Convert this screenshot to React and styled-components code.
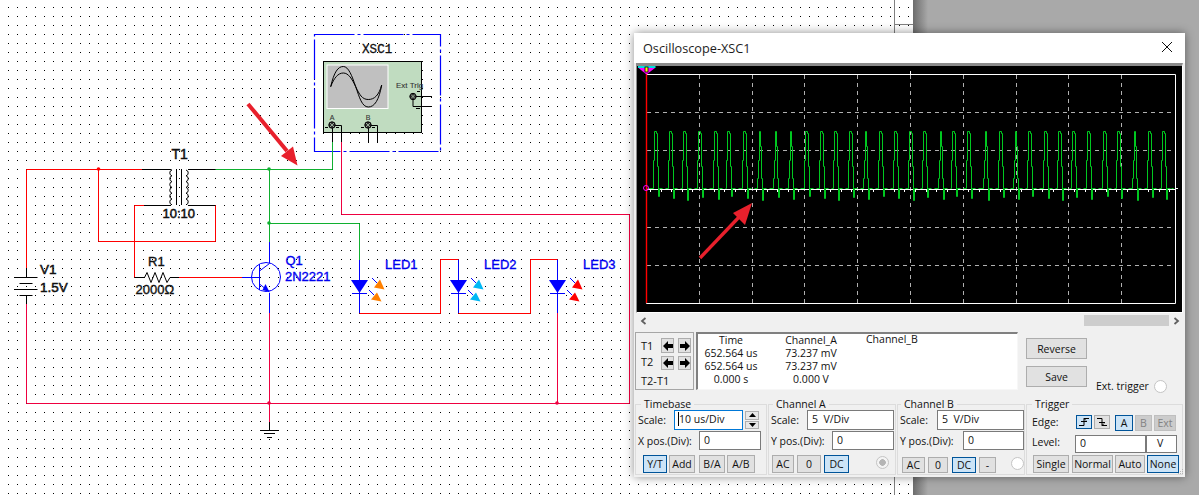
import React from 'react';
import styled, { createGlobalStyle } from 'styled-components';

const Global = createGlobalStyle`
  html, body { margin: 0; padding: 0; background: #a9a9a9; }
`;

const Page = styled.div`
  position: relative;
  width: 1199px;
  height: 495px;
  overflow: hidden;
  background: linear-gradient(to right, #6c6c6c 913px, #a9a9a9 928px);
`;
const Sheet = styled.svg`
  display: block;
  width: 913px;
  height: 495px;
  background: #fff;
`;
const Wire = styled.path`
  fill: none;
  stroke: ${p => p.$c};
  stroke-width: ${p => p.$w || 1}px;
`;
const Part = styled.g`
  fill: none;
  stroke: ${p => p.$c || '#000'};
  stroke-width: 1px;
`;
const Filled = styled.path`
  fill: ${p => p.$c};
  stroke: none;
`;
const Node = styled.circle`
  fill: ${p => p.$c};
  stroke: none;
`;
const Ref = styled.text`
  font-family: 'Liberation Sans', Arial, sans-serif;
  font-size: ${p => p.$s || 13}px;
  fill: ${p => p.$c || '#111'};
  stroke: ${p => p.$c || '#111'};
  stroke-width: ${p => p.$sw || 0.35}px;
  text-anchor: ${p => p.$a || 'start'};
`;
const Mono = styled(Ref)`
  font-family: 'Liberation Mono', monospace;
  font-size: 12.5px;
  letter-spacing: 0.1px;
`;

const Dialog = styled.div`
  position: absolute;
  left: 634px;
  top: 33px;
  width: 551px;
  height: 444px;
  background: #f0f0f0;
  box-shadow: 0 0 9px rgba(0, 0, 0, 0.45);
  font-family: 'Open Sans', 'Noto Sans', sans-serif;
  font-size: 10.5px;
  color: #111;
`;
const TitleBar = styled.div`
  height: 30px;
  box-sizing: border-box;
  background: #fff;
  padding: 0 9px;
  display: flex;
  align-items: center;
  justify-content: space-between;
  font-size: 12.7px;
  color: #1c1c1c;
`;
const CloseIcon = styled.svg`
  width: 12px;
  height: 12px;
  margin-right: 3px;
  margin-top: -2px;
  stroke: #111;
  stroke-width: 1px;
  fill: none;
`;
const ScreenFrame = styled.div`
  height: 250px;
  box-sizing: border-box;
  margin: 0 2px 0 2px;
  border-top: 3px solid #8b8b8b;
  border-left: 1px solid #8b8b8b;
  border-right: 1px solid #fff;
  border-bottom: 1px solid #fff;
  background: #000;
`;
const Plot = styled.svg`
  display: block;
  width: 545px;
  height: 246px;
  background: #000;
`;
const ScrollBar = styled.div`
  margin-top: 1px;
  height: 13px;
  display: flex;
  align-items: center;
  padding: 0 5px 0 6px;
`;
const Thumb = styled.div`
  width: 85px;
  height: 11px;
  margin-left: auto;
  background: #cdcdcd;
`;
const Chevron = styled.svg`
  width: 7px;
  height: 8px;
  margin-left: ${p => (p.$right ? '4px' : '0')};
  fill: none;
  stroke: #606060;
  stroke-width: 1.8px;
`;
const MiddleRow = styled.div`
  margin-top: 5px;
  height: 58px;
  padding-left: 1px;
  display: flex;
`;
const CursorPanel = styled.div`
  width: 59px;
  box-sizing: border-box;
  border: 1px solid #a6a6a6;
  padding: 5px 0 0 5px;
  display: grid;
  grid-template-columns: 16px 13px 13px;
  grid-template-rows: 15px 14px 1fr;
  column-gap: 4px;
  row-gap: 3px;
  align-items: center;
  font-size: 11px;
`;
const CursorName = styled.div`
  margin-top: ${p => p.$mt || 0}px;
`;
const SpanAll = styled.div`
  grid-column: 1 / -1;
  padding-bottom: 4px;
  white-space: nowrap;
`;
const ArrowButton = styled.button`
  width: 13px;
  height: 100%;
  padding: 0;
  border: 1px solid #adadad;
  background: #e1e1e1;
  display: flex;
  align-items: center;
  justify-content: center;
  svg { width: 10px; height: 10px; fill: #000; }
`;
const Readout = styled.div`
  width: 322px;
  margin-left: 2px;
  box-sizing: border-box;
  background: #fff;
  border-top: 2px solid #808080;
  border-left: 2px solid #808080;
  border-right: 1px solid #f7f7f7;
  border-bottom: 1px solid #f7f7f7;
  display: grid;
  grid-template-columns: 66px 94px 1fr;
  grid-auto-rows: 13px;
  line-height: 13px;
  text-align: center;
`;
const ReadoutLeft = styled.div`
  text-align: left;
  padding-left: 8px;
  margin-top: -1px;
`;
const Actions = styled.div`
  width: 61px;
  margin-left: 8px;
  padding-top: 6px;
  display: flex;
  flex-direction: column;
  gap: 7px;
`;
const ExtTrigger = styled.div`
  margin-left: 9px;
  align-self: flex-end;
  display: flex;
  align-items: center;
  gap: 5px;
  margin-bottom: -3px;
  font-size: 10.5px;
`;
const Btn = styled.div`
  box-sizing: border-box;
  width: ${p => p.$w}px;
  height: ${p => p.$h || 18}px;
  margin-left: ${p => p.$ml || 0}px;
  border: 1px solid ${p => (p.$on ? '#005499' : p.$off ? '#bfbfbf' : '#adadad')};
  background: ${p => (p.$on ? '#cce4f7' : p.$off ? '#cccccc' : '#e1e1e1')};
  color: ${p => (p.$off ? '#838383' : '#111')};
  display: flex;
  align-items: center;
  justify-content: center;
  font-size: 10.5px;
  flex: none;
  svg { width: 12px; height: 10px; fill: none; stroke: #000; stroke-width: 1px; }
`;
const Radio = styled.div`
  box-sizing: border-box;
  width: 13px;
  height: 13px;
  flex: none;
  margin-left: ${p => p.$ml || 0}px;
  margin-top: ${p => p.$mt || 0}px;
  border-radius: 50%;
  border: 1px solid #c4c4c4;
  background: ${p => (p.$dot ? 'radial-gradient(circle, #b5b5b5 3px, #f4f4f4 3.6px)' : '#fff')};
`;
const Controls = styled.div`
  margin-top: 8px;
  height: 77px;
  padding-left: 1px;
  display: flex;
  gap: 1px;
`;
const Group = styled.fieldset`
  box-sizing: border-box;
  width: ${p => p.$w}px;
  height: 77px;
  min-width: 0;
  margin: 0;
  padding: 0 0 0 ${p => p.$pad || 1}px;
  border: 1px solid #dcdcdc;
  flex: none;
`;
const Legend = styled.legend`
  margin-left: ${p => p.$ml || 5}px;
  padding: 0 3px;
  line-height: 12px;
  font-size: 10.5px;
`;
const Row = styled.div`
  box-sizing: border-box;
  display: flex;
  height: ${p => p.$h}px;
  margin-top: ${p => p.$mt || 0}px;
  align-items: flex-start;
  padding-top: ${p => p.$pt || 0}px;
  gap: ${p => p.$gap || 0}px;
`;
const Label = styled.div`
  width: ${p => p.$w}px;
  flex: none;
  line-height: 14px;
  margin-top: ${p => p.$mt || 0}px;
  margin-left: ${p => p.$ml || 0}px;
  white-space: nowrap;
  font-size: 10.5px;
`;
const Field = styled.div`
  box-sizing: border-box;
  width: ${p => p.$w}px;
  height: ${p => p.$h || 20}px;
  flex: none;
  background: #fff;
  border: 1px solid ${p => (p.$focus ? '#0078d7' : '#7a7a7a')};
  padding-left: ${p => p.$pl || 4}px;
  line-height: ${p => (p.$h || 20) - 3}px;
  white-space: pre;
  font-size: 10.5px;
`;
const Caret = styled.span`
  border-left: 1px solid #000;
`;
const Spinner = styled.div`
  width: 14px;
  height: 18px;
  margin: 1px 0 0 2px;
  display: flex;
  flex-direction: column;
  gap: 1px;
  flex: none;
`;
const SpinPart = styled.div`
  flex: 1;
  border: 1px solid #b0b0b0;
  background: #e8e8e8;
  display: flex;
  align-items: center;
  justify-content: center;
  svg { width: 7px; height: 4px; fill: #000; }
`;
const Grip = styled.svg`
  position: absolute;
  right: 1px;
  bottom: 1px;
  width: 7px;
  height: 7px;
  fill: #b5b5b5;
`;

const wires = [
  ['#ff0000', 'M142 169.5H26.5V268'],
  ['#000', 'M26.5 268V277M26.5 296V304'],
  ['#ee0040', 'M26.5 304V403.5H629.5V214.5H341.5V142'],
  ['#000', 'M142 169.5H171.5M188 169.5H215.5M144 205.5H171M188 205.5H215.5'],
  ['#ff0000', 'M98.5 169.5V241.5H215.5V205.5M144 205.5H134.5V277.5H144'],
  ['#000', 'M134.5 277.5H145M170 277.5H179'],
  ['#ff0000', 'M179 277.5H242'],
  ['#0000ff', 'M242 277.5H259'],
  ['#10b030', 'M215.5 169.5H332.5V142M269.5 169.5V242M269.5 223.5H359.5V260'],
  ['#0000ff', 'M269.5 242V263M269.5 293V313'],
  ['#ee0040', 'M269.5 313V422M557.5 313V403.5'],
  ['#000', 'M269.5 422V430'],
  ['#0000ff', 'M359.5 260V313M458.5 259.5V313M557.5 259.5V313'],
  ['#ff0000', 'M359.5 313.5H440.5V259.5H458.5M458.5 313.5H530.5V259.5H557.5'],
  ['#000', 'M332.5 125V142M341.5 125.5V142M332.5 125.5H341.5M368.5 125V142M368.5 125.5H377.5V142'],
];

const coil = (x, sweep) => {
  let d = `M${x} 170`;
  for (let i = 0; i < 6; i++) d += `a3 3 0 0 ${sweep} 0 5.8`;
  return d;
};

const LED = ({ dx, color }) => (
  <g transform={`translate(${dx} 0)`}>
    <Filled $c="#0000ff" d="M351 280H368L359.5 293Z" />
    <Part $c="#0000ff"><path d="M352 293.5H367" /></Part>
    <Part $c="#0000ff"><path d="M372 278L377 283M369 290L374 295" /></Part>
    <Filled $c={color} d="M380 279.5L384.5 289.5L374 287.5Z" />
    <Filled $c={color} d="M377 292.5L381.5 301.5L371 299.5Z" />
  </g>
);

const Terminal = ({ x, y }) => (
  <g>
    <circle cx={x} cy={y} r="3.2" fill="#333" stroke="#000" />
    <path d={`M${x - 2} ${y - 2}L${x + 2} ${y + 2}M${x + 2} ${y - 2}L${x - 2} ${y + 2}`} stroke="#c0dcc0" strokeWidth="0.7" />
  </g>
);

const Schematic = () => (
  <Sheet viewBox="0 0 913 495">
    <defs>
      <pattern id="dots" x="8" y="7" width="9" height="9" patternUnits="userSpaceOnUse">
        <rect width="1" height="1" fill="#000" />
      </pattern>
    </defs>
    <rect width="913" height="495" fill="url(#dots)" />
    <Wire $c="#808080" d="M894.5 0V495M895 24.5H913" />

    <Wire $c="#0000ff" $w={1.2} strokeDasharray="40 3 3 3" d="M314.5 34.5H440.5V151.5H314.5Z" />
    <Mono x="362" y="53" $sw={0.3}>XSC1</Mono>
    <rect x="323.5" y="61.5" width="98" height="71" fill="#c0dcc0" stroke="#000" />
    <rect x="327" y="65" width="61" height="43.5" fill="#c0c0c0" stroke="#fff" />
    <Part>
      <path d="M330.7 86.7C334 72 338 66.5 343.3 66.5S352 76 355.7 86.7S362 107 368.3 107S379 100 381.7 85" />
      <path d="M330.7 86.7C334 78 338 73 343.3 73S352 79 355.7 86.7S362 99.5 368.3 99.5S379 95 381.7 85" />
      <path d="M413 96.5H432M413 96.5V106.5H432" />
      <path d="M417 91.5H420M416 108.5H420M325 127.5H328M336 127.5H339M361 127.5H364M372 127.5H375" />
    </Part>
    <Ref x="396" y="88" $s={8} $c="#333" $sw={0.1}>Ext Trig</Ref>
    <Ref x="332" y="120" $s={7} $a="middle" $c="#333" $sw={0.1}>A</Ref>
    <Ref x="368" y="120" $s={7} $a="middle" $c="#333" $sw={0.1}>B</Ref>

    {wires.map(([c, d], i) => <Wire key={i} $c={c} d={d} />)}

    <Terminal x={413} y={96.5} />
    <Terminal x={332} y={125} />
    <Terminal x={368} y={125} />

    <Node $c="#ff0000" cx="98.5" cy="169" r="1.8" />
    <Node $c="#10b030" cx="269" cy="169" r="1.8" />
    <Node $c="#10b030" cx="269" cy="223" r="1.8" />
    <Node $c="#ee0040" cx="269" cy="403" r="1.8" />
    <Node $c="#ee0040" cx="557" cy="403" r="1.8" />

    <Part>
      <path d={coil(172, 0)} />
      <path d={coil(186, 1)} />
      <path d="M176.5 169V205M181.5 169V205" />
      <path d="M144.5 277.5L147 272.5L151 282.5L155 272.5L159 282.5L163 272.5L167 282.5L170 277.5" />
      <path d="M14 277.5H37.5M19.5 283.5H32.5M14 289.5H37.5M19.5 295.5H32.5" />
      <path d="M260 430.5H279M264 433.5H275M267 437.5H272" />
    </Part>
    <Ref x="171.5" y="159" $s={14} $sw={0.5}>T1</Ref>
    <Ref x="162.5" y="218" $sw={0.5}>10:10</Ref>
    <Ref x="148" y="265.5">R1</Ref>
    <Ref x="135.5" y="294">2000Ω</Ref>
    <Ref x="40" y="274" $s={13.5} $sw={0.5}>V1</Ref>
    <Ref x="40" y="292" $s={13.5} $sw={0.5}>1.5V</Ref>

    <Part $c="#0000ff">
      <circle cx="266" cy="277" r="14.5" />
      <path d="M259.5 264V290M259.5 271L269.5 263.5M259.5 284L269.5 292" />
    </Part>
    <Filled $c="#0000ff" d="M269.5 292L262.5 290L265.5 284Z" />
    <Ref x="285.5" y="265" $c="#0000f0">Q1</Ref>
    <Ref x="285" y="280.5" $c="#0000f0">2N2221</Ref>

    <LED dx={0} color="#ff8000" />
    <LED dx={99} color="#00b8f5" />
    <LED dx={198} color="#ff0000" />
    <Ref x="385" y="268.5" $c="#0000f0">LED1</Ref>
    <Ref x="484" y="268.5" $c="#0000f0">LED2</Ref>
    <Ref x="583" y="268.5" $c="#0000f0">LED3</Ref>

    <Wire $c="#e8202c" $w={4} d="M248 104L287 151" />
    <Filled $c="#e8202c" d="M297.5 165.5L293 146.5L281 156Z" />
  </Sheet>
);

const pulses = [70,111,150,191,233,271,313,355,400,442,486,527,566,607,648,688,729,771,811,853,891,932,978,1020,1060,1101,1143,1181,1222,1263,1305,1345,1388,1430,1470];
const narrow = new Set([355, 400, 442, 648, 853, 978, 1060, 1388]);

const wavePath = () => {
  let d = 'M647.5 188.5';
  pulses.forEach((z, i) => {
    const x = Math.round(630 + z / 2.756) + 0.5;
    const kick = 196.5 + ((i * 7) % 5);
    if (narrow.has(z)) {
      d += `H${x - 2}V178.5H${x - 1}V160.5H${x}V131.5H${x + 1}V146.5H${x + 2}V178.5H${x + 3}V${kick}H${x + 4}V188.5`;
    } else {
      d += `H${x - 2}V160.5H${x - 1}V131.5H${x + 1}V133.5H${x + 2}V166.5H${x + 3}V${kick}H${x + 4}V188.5`;
    }
    d += `H${x + 7}M${x + 10} 188.5`;
  });
  return d + 'H1171.5';
};

const xGrid = [699.5, 752.5, 804.5, 857.5, 910.5, 963.5, 1016.5, 1068.5, 1121.5];
const yGrid = [112.5, 150.5, 227.5, 265.5];
const ticks = Array.from({ length: 50 }, (_, i) => 650 + i * 10.6);

const Scope = () => (
  <Plot viewBox="637 66 545 246">
    {xGrid.map(x => <Wire key={x} $c="#b0b0b0" strokeDasharray="4 4" d={`M${x} 75V303`} />)}
    {yGrid.map(y => <Wire key={y} $c="#b0b0b0" strokeDasharray="4 4" d={`M647 ${y}H1175`} />)}
    <Wire $c="#fff" d="M646.5 74.5H1175.5V303.5H646.5Z" />
    <Wire $c="#fff" d="M910.5 71V75M1175 188.5H1178" />
    <Wire $c="#fff" d="M646 189.5H1176" />
    {ticks.map(x => <Wire key={x} $c="#fff" d={`M${x.toFixed(0)}.5 190V192`} />)}
    <Wire $c="#00c820" d={wavePath()} />
    <Wire $c="#ff0000" $w={1.4} d="M646.5 72V303" />
    <Filled $c="#ff00ff" d="M638.5 68H655L646.5 74.5Z" />
    <Filled $c="#00e0e0" d="M638 66H655.5V68H638Z" />
    <rect x="645" y="67" width="3" height="5" fill="#ffff00" stroke="#000" strokeWidth="0.8" />
    <circle cx="646" cy="188" r="2.5" fill="none" stroke="#ff00ff" />
    <Wire $c="#e8202c" $w={3.4} d="M700 258L741 215" />
    <Filled $c="#e8202c" d="M752 203L733 213L745 225Z" />
  </Plot>
);

const ArrowLeft = () => <svg viewBox="0 0 10 10"><path d="M0 5L5 0V3H10V7H5V10Z" /></svg>;
const ArrowRight = () => <svg viewBox="0 0 10 10"><path d="M10 5L5 0V3H0V7H5V10Z" /></svg>;

const App = () => (
  <Page>
    <Global />
    <Schematic />
    <Dialog>
      <TitleBar>
        <span>Oscilloscope-XSC1</span>
        <CloseIcon viewBox="0 0 12 12"><path d="M1 1L11 11M11 1L1 11" /></CloseIcon>
      </TitleBar>
      <ScreenFrame><Scope /></ScreenFrame>
      <ScrollBar>
        <Chevron viewBox="0 0 7 8"><path d="M5.5 1L2 4L5.5 7" /></Chevron>
        <Thumb />
        <Chevron $right viewBox="0 0 7 8"><path d="M1.5 1L5 4L1.5 7" /></Chevron>
      </ScrollBar>
      <MiddleRow>
        <CursorPanel>
          <CursorName>T1</CursorName>
          <ArrowButton><ArrowLeft /></ArrowButton>
          <ArrowButton><ArrowRight /></ArrowButton>
          <CursorName $mt={-4}>T2</CursorName>
          <ArrowButton><ArrowLeft /></ArrowButton>
          <ArrowButton><ArrowRight /></ArrowButton>
          <SpanAll>T2-T1</SpanAll>
        </CursorPanel>
        <Readout>
          <div>Time</div><div>Channel_A</div><ReadoutLeft>Channel_B</ReadoutLeft>
          <div>652.564 us</div><div>73.237 mV</div><div />
          <div>652.564 us</div><div>73.237 mV</div><div />
          <div>0.000 s</div><div>0.000 V</div><div />
        </Readout>
        <Actions>
          <Btn $w={61} $h={21}>Reverse</Btn>
          <Btn $w={61} $h={21}>Save</Btn>
        </Actions>
        <ExtTrigger>Ext. trigger <Radio /></ExtTrigger>
      </MiddleRow>
      <Controls>
        <Group $w={132} $pad={2}>
          <Legend $ml={3}>Timebase</Legend>
          <Row $h={20}>
            <Label $w={36} $mt={3}>Scale:</Label>
            <Field $w={69} $focus $pl={3}><Caret />10 us/Div</Field>
            <Spinner>
              <SpinPart><svg viewBox="0 0 7 4"><path d="M3.5 0L7 4H0Z" /></svg></SpinPart>
              <SpinPart><svg viewBox="0 0 7 4"><path d="M0 0H7L3.5 4Z" /></svg></SpinPart>
            </Spinner>
          </Row>
          <Row $h={19} $mt={1}>
            <Label $w={61} $mt={3}>X pos.(Div):</Label>
            <Field $w={62} $h={19}>0</Field>
          </Row>
          <Row $h={18} $mt={5} $gap={2}>
            <Btn $w={24} $ml={5} $on>Y/T</Btn>
            <Btn $w={26}>Add</Btn>
            <Btn $w={26} $ml={2}>B/A</Btn>
            <Btn $w={28}>A/B</Btn>
          </Row>
        </Group>
        <Group $w={128} $pad={1}>
          <Legend $ml={3}>Channel A</Legend>
          <Row $h={20}>
            <Label $w={36} $mt={3} $ml={1}>Scale:</Label>
            <Field $w={87}>5  V/Div</Field>
          </Row>
          <Row $h={19} $mt={1}>
            <Label $w={61} $mt={3} $ml={1}>Y pos.(Div):</Label>
            <Field $w={62} $h={19}>0</Field>
          </Row>
          <Row $h={18} $mt={5} $gap={3}>
            <Btn $w={22} $ml={2}>AC</Btn>
            <Btn $w={24}>0</Btn>
            <Btn $w={25} $on>DC</Btn>
            <Radio $dot $ml={24} $mt={1} />
          </Row>
        </Group>
        <Group $w={128} $pad={1}>
          <Legend $ml={2}>Channel B</Legend>
          <Row $h={20}>
            <Label $w={37} $mt={3} $ml={1}>Scale:</Label>
            <Field $w={87}>5  V/Div</Field>
          </Row>
          <Row $h={19} $mt={1}>
            <Label $w={63} $mt={3} $ml={1}>Y pos.(Div):</Label>
            <Field $w={61} $h={19}>0</Field>
          </Row>
          <Row $h={18} $mt={5} $pt={2} $gap={3}>
            <Btn $w={23} $h={16} $ml={3}>AC</Btn>
            <Btn $w={20} $h={16}>0</Btn>
            <Btn $w={24} $h={16} $ml={1} $on>DC</Btn>
            <Btn $w={17} $h={16}>-</Btn>
            <Radio $ml={12} />
          </Row>
        </Group>
        <Group $w={157} $pad={1}>
          <Legend $ml={4}>Trigger</Legend>
          <Row $h={25} $pt={5} $gap={2}>
            <Label $w={42} $ml={4}>Edge:</Label>
            <Btn $w={16} $h={14} $on>
              <svg viewBox="0 0 12 10"><path d="M1 8.5H6V1.5H11M3 4.5H9M6 1.5L8 3.5" /></svg>
            </Btn>
            <Btn $w={16} $h={14}>
              <svg viewBox="0 0 12 10"><path d="M1 1.5H6V8.5H11M3 5.5H9M6 8.5L8 6.5" /></svg>
            </Btn>
            <Btn $w={18} $h={16} $ml={3} $on>A</Btn>
            <Btn $w={17} $h={16} $off>B</Btn>
            <Btn $w={22} $h={16} $off>Ext</Btn>
          </Row>
          <Row $h={18}>
            <Label $w={43} $ml={4}>Level:</Label>
            <Field $w={71} $h={18}>0</Field>
            <Field $w={31} $h={18} $pl={10}>V</Field>
          </Row>
          <Row $h={18} $mt={2} $gap={2}>
            <Btn $w={36} $ml={5}>Single</Btn>
            <Btn $w={41} $ml={1}>Normal</Btn>
            <Btn $w={30}>Auto</Btn>
            <Btn $w={32} $on>None</Btn>
          </Row>
        </Group>
      </Controls>
      <Grip viewBox="0 0 7 7">
        <rect x="5" y="0" width="1" height="1" />
        <rect x="3" y="2" width="1" height="1" /><rect x="5" y="2" width="1" height="1" />
        <rect x="1" y="4" width="1" height="1" /><rect x="3" y="4" width="1" height="1" /><rect x="5" y="4" width="1" height="1" />
      </Grip>
    </Dialog>
  </Page>
);

export default App;
